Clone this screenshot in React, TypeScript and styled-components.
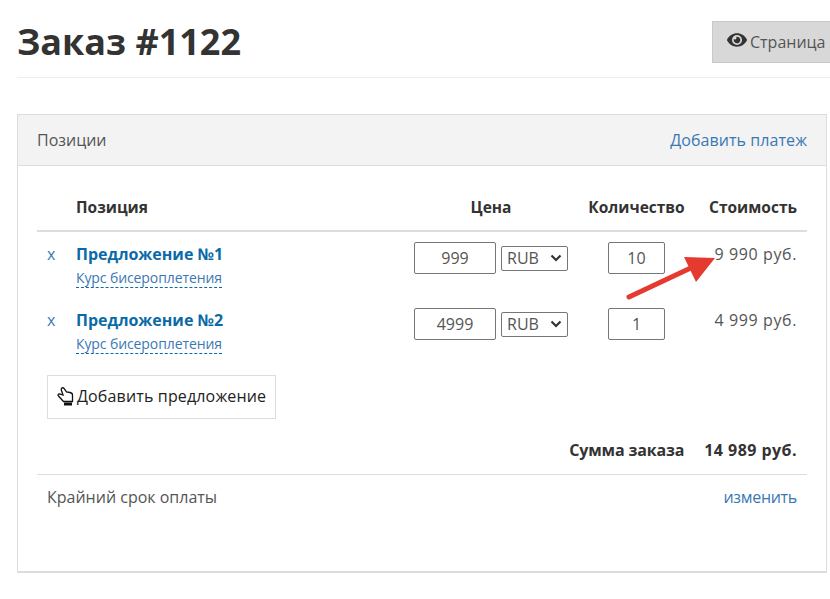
import React from 'react';
import styled, { createGlobalStyle } from 'styled-components';
import { FaEye } from 'react-icons/fa';

const palette = {
  text: '#333333',
  muted: '#555555',
  link: '#0a6aa8',
  softLink: '#3a78b5',
  line: '#dddddd',
  red: '#e53a30',
};

const GlobalStyle = createGlobalStyle`
  html, body {
    margin: 0;
    padding: 0;
    background: #fff;
    overflow: hidden;
  }
  body {
    font-family: "Open Sans", "Noto Sans", sans-serif;
    font-size: 16px;
    color: ${palette.text};
  }
`;

const Page = styled.div`
  width: 830px;
  height: 599px;
  box-sizing: border-box;
  padding: 0 3px 0 17px;
  overflow: hidden;
`;

const Header = styled.header`
  display: flex;
  justify-content: space-between;
  align-items: flex-start;
  height: 77px;
  margin-right: -30px;
  margin-bottom: 36px;
  border-bottom: 1px solid #eeeeee;
`;

const Title = styled.h1`
  margin: 16px 0 0;
  font-size: 36px;
  line-height: 52px;
  font-weight: 700;
  color: ${palette.text};
`;

const ViewButton = styled.button`
  display: flex;
  align-items: center;
  gap: 3px;
  flex-shrink: 0;
  width: 145px;
  height: 42px;
  margin-top: 21px;
  padding: 0 0 0 14px;
  border: 1px solid #c9c9c9;
  background: #d8d8d8;
  color: ${palette.muted};
  font: inherit;

  svg {
    margin-bottom: 5px;
  }
`;

const Panel = styled.section`
  position: relative;
  height: 459px;
  box-sizing: border-box;
  border: 1px solid ${palette.line};
  border-bottom-width: 2px;
`;

const PanelHeading = styled.div`
  display: flex;
  justify-content: space-between;
  align-items: center;
  height: 50px;
  padding: 0 19px;
  background: #f3f3f3;
  border-bottom: 1px solid ${palette.line};
  color: ${palette.muted};
`;

const HeadingLink = styled.a`
  color: ${palette.softLink};
  letter-spacing: 0.07px;
`;

const PanelBody = styled.div`
  padding: 16px 19px 0;
`;

const Row = styled.div`
  display: grid;
  grid-template-columns: 38px 329px 174px 117px 112px;
  align-items: start;
`;

const HeadRow = styled(Row)`
  height: 46px;
  padding-top: 2px;
  align-items: center;
  border-bottom: 2px solid ${palette.line};
  font-size: 15.5px;
  font-weight: 700;
`;

const ItemRow = styled(Row)`
  height: 66px;
  padding-top: 10px;
  box-sizing: border-box;
`;

const PriceCell = styled.div`
  display: flex;
  justify-content: center;
  align-items: center;
  gap: 5px;
`;

const QtyCell = styled.div`
  display: flex;
  justify-content: center;
`;

const HeadLabel = styled.span`
  padding-left: 1px;
`;

const HeadCenter = styled.div`
  text-align: center;
`;

const Cost = styled.div`
  padding-right: 10px;
  text-align: right;
  line-height: 24px;
  letter-spacing: 0.6px;
  color: ${palette.muted};
  white-space: nowrap;
`;

const HeadCost = styled.div`
  padding-right: 10px;
  text-align: right;
  white-space: nowrap;
`;

const RemoveLink = styled.a`
  padding-left: 10px;
  line-height: 24px;
  color: ${palette.softLink};
`;

const OfferName = styled.a`
  display: block;
  margin-left: 1px;
  line-height: 24px;
  font-weight: 700;
  color: ${palette.link};
`;

const CourseLink = styled.a`
  display: inline-block;
  margin: -2px 0 0 1px;
  font-size: 14px;
  line-height: 18px;
  letter-spacing: -0.1px;
  color: ${palette.softLink};
  border-bottom: 1px dashed ${palette.link};
`;

const NumberBox = styled.div<{ $wide?: boolean }>`
  width: ${(p) => (p.$wide ? 82 : 57)}px;
  height: 32px;
  box-sizing: border-box;
  border: 1px solid #767676;
  border-radius: 2px;
  text-align: center;
  line-height: 30px;
  color: ${palette.muted};
`;

const CurrencyBox = styled.div`
  display: flex;
  align-items: center;
  justify-content: space-between;
  width: 67px;
  height: 25px;
  box-sizing: border-box;
  padding: 0 5px;
  border: 1px solid #767676;
  border-radius: 2px;
  color: ${palette.muted};
`;

const AddButton = styled.button`
  display: flex;
  align-items: center;
  gap: 3px;
  width: 229px;
  height: 44px;
  margin: 11px 0 0 10px;
  padding: 0 0 2px 9px;
  box-sizing: border-box;
  background: #fff;
  border: 1px solid ${palette.line};
  color: #222;
  font: inherit;
  letter-spacing: 0.15px;
`;

const TotalRow = styled.div`
  display: flex;
  justify-content: flex-end;
  gap: 20px;
  height: 55px;
  padding: 19px 10px 0 0;
  box-sizing: border-box;
  line-height: 24px;
  font-weight: 700;
`;

const TotalLabel = styled.span`
  letter-spacing: -0.15px;
`;

const TotalSum = styled.span`
  letter-spacing: 0.45px;
`;

const DeadlineRow = styled.div`
  display: flex;
  justify-content: space-between;
  padding: 10px 10px 0;
  border-top: 1px solid ${palette.line};
  line-height: 24px;
  color: ${palette.muted};
`;

const ChangeLink = styled.a`
  color: ${palette.softLink};
  letter-spacing: -0.3px;
`;

const Arrow = styled.svg`
  position: absolute;
  left: 605px;
  top: 138px;
`;

const Chevron = () => (
  <svg width="12" height="8" viewBox="0 0 12 8">
    <path d="M1.500 1.500 6 6l4.500-4.500" fill="none" stroke="#333" strokeWidth="2.2" />
  </svg>
);

const Hand = () => (
  <svg width="17" height="19" viewBox="0 0 17 19">
    <path
      d="M4.500 1.500C5.200.4 6.500.6 7 1.500L9.500 5l3.500.5c1.500.3 2.500 1.200 2.500 2.500v6.500H6.500L1.500 9c-1-1-.2-2.300 1-2.200L6 8 4.300 3c-.1-.6 0-1 .2-1.500z"
      fill="#fff"
      stroke="#111"
      strokeWidth="1.300"
    />
    <rect x="7" y="15.500" width="8" height="3" fill="#111" />
  </svg>
);

const items = [
  { name: 'Предложение №1', price: '999', qty: '10', cost: '9 990 руб.' },
  { name: 'Предложение №2', price: '4999', qty: '1', cost: '4 999 руб.' },
];

const App: React.FC = () => {
  return (
    <Page>
      <GlobalStyle />
      <Header>
        <Title>Заказ #1122</Title>
        <ViewButton>
          <FaEye size={20} color="#333" />
          Страница
        </ViewButton>
      </Header>
      <Panel>
        <PanelHeading>
          <span>Позиции</span>
          <HeadingLink>Добавить платеж</HeadingLink>
        </PanelHeading>
        <PanelBody>
          <HeadRow>
            <span />
            <HeadLabel>Позиция</HeadLabel>
            <HeadCenter>Цена</HeadCenter>
            <HeadCenter>Количество</HeadCenter>
            <HeadCost>Стоимость</HeadCost>
          </HeadRow>
          {items.map((item) => (
            <ItemRow key={item.name}>
              <RemoveLink>x</RemoveLink>
              <div>
                <OfferName>{item.name}</OfferName>
                <CourseLink>Курс бисероплетения</CourseLink>
              </div>
              <PriceCell>
                <NumberBox $wide>{item.price}</NumberBox>
                <CurrencyBox>
                  RUB
                  <Chevron />
                </CurrencyBox>
              </PriceCell>
              <QtyCell>
                <NumberBox>{item.qty}</NumberBox>
              </QtyCell>
              <Cost>{item.cost}</Cost>
            </ItemRow>
          ))}
          <AddButton>
            <Hand />
            Добавить предложение
          </AddButton>
          <TotalRow>
            <TotalLabel>Сумма заказа</TotalLabel>
            <TotalSum>14 989 руб.</TotalSum>
          </TotalRow>
          <DeadlineRow>
            <span>Крайний срок оплаты</span>
            <ChangeLink>изменить</ChangeLink>
          </DeadlineRow>
        </PanelBody>
        <Arrow width="120" height="60" viewBox="0 0 120 60">
          <line x1="6" y1="44" x2="72" y2="13" stroke={palette.red} strokeWidth="5" strokeLinecap="round" />
          <polygon points="61,4 92,5 73,29" fill={palette.red} />
        </Arrow>
      </Panel>
    </Page>
  );
};

export default App;
